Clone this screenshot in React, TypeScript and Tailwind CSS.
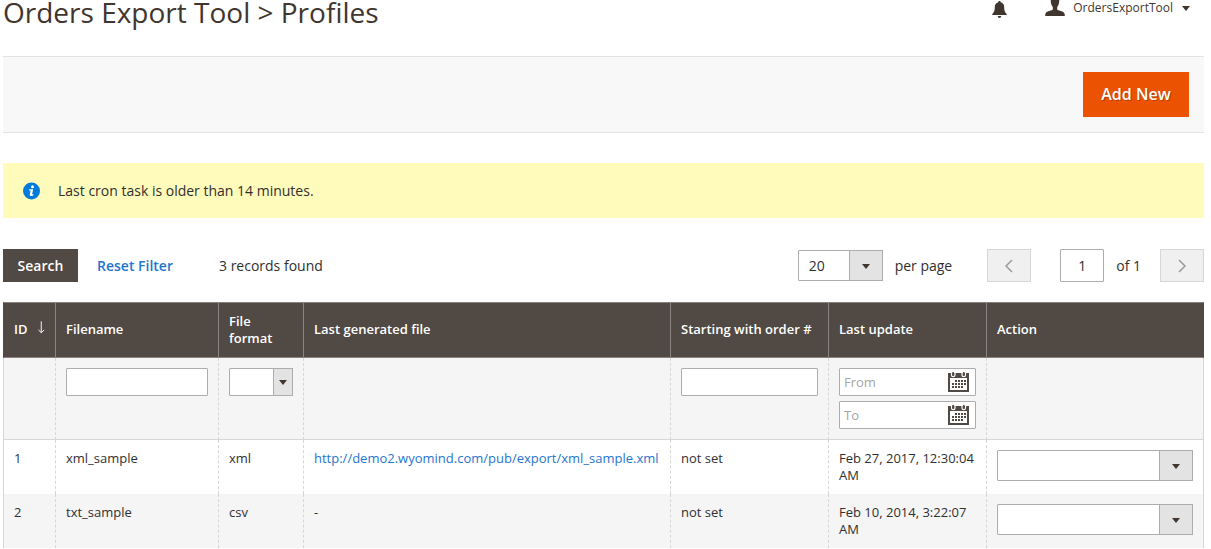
import type { ReactNode } from "react";
import clsx from "clsx";

interface Profile {
  id: number;
  filename: string;
  format: string;
  url?: string;
  startingWith: string;
  updated: string;
}

const profiles: Profile[] = [
  {
    id: 1,
    filename: "xml_sample",
    format: "xml",
    url: "http://demo2.wyomind.com/pub/export/xml_sample.xml",
    startingWith: "not set",
    updated: "Feb 27, 2017, 12:30:04 AM",
  },
  {
    id: 2,
    filename: "txt_sample",
    format: "csv",
    startingWith: "not set",
    updated: "Feb 10, 2014, 3:22:07 AM",
  },
];

const inputClass =
  "block h-7 w-full rounded-[1px] border border-[#adadad] bg-white px-1 text-[13px] placeholder:text-[#a5a5a5] outline-none";

function BellIcon() {
  return (
    <svg width="15" height="17" viewBox="0 0 15 17" fill="#41362f" aria-hidden="true">
      <path d="M7.500 0C8.200 0 8.700.5 8.700 1.200C11 1.800 12.200 3.600 12.200 6C12.200 10 13 11.200 14.800 13.200V14H.2V13.200C2 11.200 2.800 10 2.800 6C2.800 3.600 4 1.800 6.300 1.200C6.300.5 6.800 0 7.500 0Z" />
      <path d="M5.800 15H9.200C9.200 16.200 8.500 17 7.500 17S5.800 16.200 5.800 15Z" />
    </svg>
  );
}

function UserIcon() {
  return (
    <svg width="20" height="16" viewBox="0 0 20 16" fill="#41362f" aria-hidden="true">
      <path d="M5.700 0H14.300C14.300 3.500 13.500 5.500 12.200 7V9.600C13 10.700 18 11.200 19.200 13C19.700 13.800 19.800 14.800 19.800 16H.2C.2 14.800.3 13.800.8 13C2 11.200 7 10.700 7.800 9.600V7C6.500 5.500 5.700 3.500 5.700 0Z" />
    </svg>
  );
}

function InfoIcon() {
  return (
    <svg width="18" height="18" viewBox="0 0 18 18" aria-hidden="true">
      <circle cx="8.500" cy="9" r="8.500" fill="#007bdb" />
      <circle cx="9.500" cy="4.700" r="1.500" fill="#fff" />
      <path d="M6.200 7.300H10.200L9.100 12.300H10.500L10.200 13.600C8.600 14.200 6.500 14 6.800 12.400L7.600 8.500H6Z" fill="#fff" />
    </svg>
  );
}

function CalendarIcon() {
  return (
    <svg width="21" height="21" viewBox="0 0 21 21" aria-hidden="true">
      <path d="M0 1H21V20H0Z" fill="#514943" />
      <path d="M2 6H19V18H2Z" fill="#fff" />
      <path d="M3.500 0V3A1.700 1.700 0 0 0 7 3V0M14 0V3A1.700 1.700 0 0 0 17.500 3V0" fill="none" stroke="#fff" strokeWidth="1.200" />
      <path d="M5.200 0V3.500M15.800 0V3.500" stroke="#514943" strokeWidth="1.600" />
      <path d="M7 9H18M4 12H18M4 15H15" stroke="#514943" strokeWidth="2" strokeDasharray="2 1" />
    </svg>
  );
}

function Caret() {
  return (
    <svg width="8" height="5" viewBox="0 0 8 5" fill="#41362f" aria-hidden="true">
      <path d="M0 0H8L4 5Z" />
    </svg>
  );
}

function Chevron({ flip = false }: { flip?: boolean }) {
  return (
    <svg
      width="8"
      height="14"
      viewBox="0 0 8 14"
      fill="none"
      stroke="#999"
      strokeWidth="1.500"
      className={clsx(flip && "rotate-180")}
      aria-hidden="true"
    >
      <path d="M7 1L1 7L7 13" />
    </svg>
  );
}

interface SelectProps {
  label: string;
  options: string[];
  small?: boolean;
}

function Select({ label, options, small = false }: SelectProps) {
  return (
    <div className="relative w-full">
      <select
        aria-label={label}
        className={clsx(
          "block w-full appearance-none rounded-[1px] border border-[#adadad] bg-white pl-[10px] text-sm outline-none",
          small ? "h-7 pr-5" : "h-[31px] pr-9"
        )}
      >
        {options.map((option) => (
          <option key={option}>{option}</option>
        ))}
      </select>
      <span
        className={clsx(
          "pointer-events-none absolute inset-y-0 right-0 flex items-center justify-center border border-[#adadad] bg-[#e3e3e3]",
          small ? "w-5" : "w-[34px] pt-[2px]"
        )}
      >
        <Caret />
      </span>
    </div>
  );
}

function DateInput({ label }: { label: string }) {
  return (
    <div className="relative">
      <input type="text" aria-label={`Last update ${label}`} placeholder={label} className={inputClass} />
      <button type="button" aria-label={`Pick date ${label}`} className="absolute top-1 right-[7px]">
        <CalendarIcon />
      </button>
    </div>
  );
}

function HeadCell({ children }: { children: ReactNode }) {
  return (
    <th className="border-y border-l border-[#8a837f] px-[10px] pb-px text-left font-semibold first:border-l-[#514943] last:border-r last:border-r-[#514943]">
      {children}
    </th>
  );
}

function Cell({ children, filter = false }: { children?: ReactNode; filter?: boolean }) {
  return (
    <td
      className={clsx(
        "border-l border-dashed border-[#d6d6d6] p-[10px] align-top first:[border-left-style:solid] last:border-r last:[border-right-style:solid]",
        filter && "border-b [border-bottom-style:solid]"
      )}
    >
      {children}
    </td>
  );
}

export default function App() {
  return (
    <div className="bg-white pr-[7px] pl-[3px] font-['Open_Sans',sans-serif] text-sm text-[#303030]">
      <header className="flex h-14 items-start justify-between">
        <h1 className="text-[28px] leading-6 text-[#41362f]">Orders Export Tool &gt; Profiles</h1>
        <div className="flex items-start pr-[14px]">
          <button type="button" aria-label="Notifications" className="mt-px mr-[38px]">
            <BellIcon />
          </button>
          <button type="button" className="flex items-start text-[#41362f]">
            <UserIcon />
            <span className="mr-[9px] ml-2 text-xs leading-4">OrdersExportTool</span>
            <span className="mt-[6px]">
              <Caret />
            </span>
          </button>
        </div>
      </header>

      <div className="flex justify-end border-y border-[#e3e3e3] bg-[#f8f8f8] px-[15px] py-[15px]">
        <button
          type="button"
          className="h-[45px] w-[106px] bg-[#eb5202] pb-[2px] text-base font-semibold text-white text-shadow-[1px_1px_0_rgba(0,0,0,0.25)]"
        >
          Add New
        </button>
      </div>

      <div className="mt-[30px] flex h-[55px] items-center gap-[17px] bg-[#fffbbb] pl-5">
        <InfoIcon />
        <p>Last cron task is older than 14 minutes.</p>
      </div>

      <div className="mt-[31px] flex h-[33px] items-center justify-between">
        <div className="flex items-center">
          <button type="button" className="h-[33px] w-[75px] bg-[#514943] font-semibold text-white">
            Search
          </button>
          <button type="button" className="ml-[19px] font-semibold text-[#1f75cf]">
            Reset Filter
          </button>
          <span className="ml-[46px]">3 records found</span>
        </div>
        <div className="flex items-center">
          <div className="w-[85px]">
            <Select label="Records per page" options={["20", "30", "50", "100", "200"]} />
          </div>
          <span className="ml-3">per page</span>
          <button
            type="button"
            aria-label="Previous page"
            disabled
            className="ml-[35px] flex h-[33px] w-11 items-center justify-center border border-[#d6d6d6] bg-[#f0f0f0]"
          >
            <Chevron />
          </button>
          <input
            type="text"
            aria-label="Current page"
            defaultValue="1"
            className="ml-[29px] h-[33px] w-11 rounded-[1px] border border-[#adadad] text-center outline-none"
          />
          <span className="ml-3">of 1</span>
          <button
            type="button"
            aria-label="Next page"
            disabled
            className="ml-[19px] flex h-[33px] w-11 items-center justify-center border border-[#d6d6d6] bg-[#f0f0f0]"
          >
            <Chevron flip />
          </button>
        </div>
      </div>

      <table className="mt-5 w-full table-fixed border-separate border-spacing-0 text-[13px] leading-[17px]">
        <colgroup>
          <col className="w-[52px]" />
          <col className="w-[163px]" />
          <col className="w-[85px]" />
          <col />
          <col className="w-[158px]" />
          <col className="w-[158px]" />
          <col className="w-[218px]" />
        </colgroup>
        <thead>
          <tr className="h-14 bg-[#514943] text-white">
            <HeadCell>
              <span className="flex items-center gap-[9px]">
                ID
                <svg width="9" height="13" viewBox="0 0 9 13" fill="none" stroke="#fff" className="mb-1" aria-hidden="true">
                  <path d="M4.500 0V12M1.500 9L4.500 12L7.500 9" />
                </svg>
              </span>
            </HeadCell>
            <HeadCell>Filename</HeadCell>
            <HeadCell>File format</HeadCell>
            <HeadCell>Last generated file</HeadCell>
            <HeadCell>Starting with order #</HeadCell>
            <HeadCell>Last update</HeadCell>
            <HeadCell>Action</HeadCell>
          </tr>
        </thead>
        <tbody>
          {/* Column filters */}
          <tr className="bg-[#f5f5f5]">
            <Cell filter />
            <Cell filter>
              <input type="text" aria-label="Filename" className={inputClass} />
            </Cell>
            <Cell filter>
              <Select label="File format" options={["", "xml", "txt", "csv"]} small />
            </Cell>
            <Cell filter />
            <Cell filter>
              <input type="text" aria-label="Starting with order #" className={inputClass} />
            </Cell>
            <Cell filter>
              <div className="flex flex-col gap-[5px]">
                <DateInput label="From" />
                <DateInput label="To" />
              </div>
            </Cell>
            <Cell filter />
          </tr>

          {profiles.map((profile) => (
            <tr key={profile.id} className="even:bg-white odd:bg-[#f5f5f5]">
              <Cell>{profile.id}</Cell>
              <Cell>{profile.filename}</Cell>
              <Cell>{profile.format}</Cell>
              <Cell>
                {profile.url ? (
                  <a href={profile.url} className="whitespace-nowrap text-[#1f75cf]">
                    {profile.url}
                  </a>
                ) : (
                  "-"
                )}
              </Cell>
              <Cell>{profile.startingWith}</Cell>
              <Cell>{profile.updated}</Cell>
              <Cell>
                <Select label={`Action for ${profile.filename}`} options={["", "Edit", "Generate", "Delete"]} />
              </Cell>
            </tr>
          ))}
        </tbody>
      </table>
    </div>
  );
}
